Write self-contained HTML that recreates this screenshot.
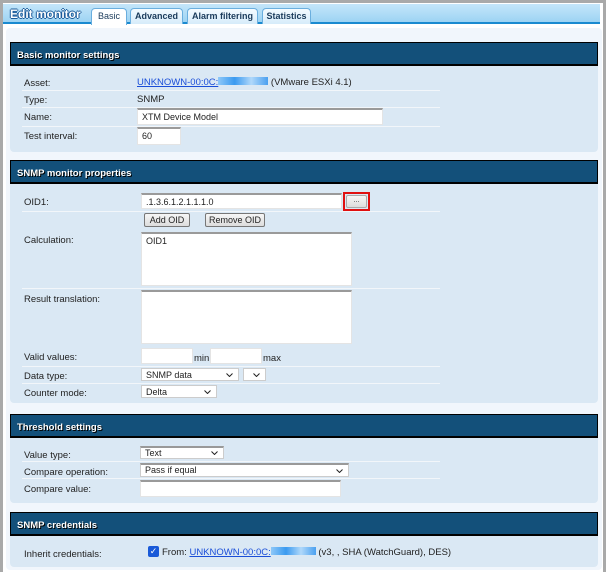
<!DOCTYPE html>
<html><head><style>
*{box-sizing:border-box;margin:0;padding:0}
body{width:606px;height:572px;background:#a9a9a9;font-family:"Liberation Sans",sans-serif;font-size:9.5px;color:#222;position:relative;overflow:hidden}
.page{position:absolute;left:3px;top:3px;width:600px;height:569px;background:#fff}
.bar{position:absolute;left:3px;top:4px;width:597px;height:20px;background:linear-gradient(#c4e6fa,#9dd3f3);border-bottom:2px solid #1a8ad0}
.title{position:absolute;left:10px;top:7px;font-size:12px;font-weight:bold;color:#fff;text-shadow:1px 0 #1a5a9a,-1px 0 #1a5a9a,0 1px #1a5a9a,0 -1px #1a5a9a}
.tab{position:absolute;top:8px;height:16px;background:linear-gradient(#f4fbff,#d6ecfa);border:1px solid #6aaede;border-bottom:none;border-radius:4px 4px 0 0;font-size:9px;font-weight:bold;color:#1a3a5a;text-align:center;line-height:15px}
.tab.on{background:#fff;height:17px;font-weight:normal}
.inner{position:absolute;left:6px;top:28px;width:596px;height:542px;background:#f1f6fc;border-radius:4px}
.sec{position:absolute;left:10px;width:588px;background:#dae8f4;border-radius:0 0 4px 4px}
.hd{position:absolute;left:0;top:0;width:100%;height:24px;background:#13507a;border:1px solid #000;border-bottom:2px solid #000;color:#fff;font-weight:bold;font-size:9.5px;padding:7px 6px;text-shadow:1px 1px #000}
.l{position:absolute;left:24px}
.v{position:absolute}
.sep{position:absolute;left:22px;width:418px;height:1px;background:#f2f6fa}
.in{position:absolute;background:#fff;border:1px solid #e4e4e4;border-top:2px solid #9a9a9a;font-size:9px;padding:2px 4px}
.sel{position:absolute;background:#fff;border:1px solid #ccc;font-size:9px;padding:0 4px;line-height:12px}
.sel svg{position:absolute;right:5px;top:4px}
.btn{position:absolute;background:linear-gradient(#f6f6f6,#ddd);border:1px solid #777;border-radius:2px;font-size:9px;text-align:center;line-height:13px}
a{color:#1a4ed8;text-decoration:underline}
.blur{display:inline-block;width:50px;height:8px;background:linear-gradient(90deg,#8ec8f8,#3a9af0,#b0d8fa,#4aa0f0)}
</style></head><body>
<div class="page"></div>
<div class="inner"></div>
<div class="bar"></div>
<div class="title">Edit monitor</div>
<div class="tab on" style="left:91px;width:36px">Basic</div>
<div class="tab" style="left:130px;width:53px">Advanced</div>
<div class="tab" style="left:187px;width:71px">Alarm filtering</div>
<div class="tab" style="left:262px;width:49px">Statistics</div>

<div class="sec" style="top:42px;height:110px"><div class="hd">Basic monitor settings</div></div>
<div class="l" style="top:78px">Asset:</div>
<div class="v" style="left:137px;top:77px"><a>UNKNOWN-00:0C:<span class="blur"></span></a> (VMware ESXi 4.1)</div>
<div class="sep" style="top:90px"></div>
<div class="l" style="top:95px">Type:</div><div class="v" style="left:137px;top:94px">SNMP</div>
<div class="sep" style="top:107px"></div>
<div class="l" style="top:112px">Name:</div>
<div class="in" style="left:137px;top:108px;width:246px;height:17px">XTM Device Model</div>
<div class="sep" style="top:126px"></div>
<div class="l" style="top:131px">Test interval:</div>
<div class="in" style="left:137px;top:127px;width:44px;height:18px">60</div>

<div class="sec" style="top:160px;height:243px"><div class="hd">SNMP monitor properties</div></div>
<div class="l" style="top:197px">OID1:</div>
<div class="in" style="left:141px;top:193px;width:201px;height:16px">.1.3.6.1.2.1.1.1.0</div>
<div style="position:absolute;left:343px;top:192px;width:27px;height:19px;border:2px solid #e01010"></div>
<div class="btn" style="left:346px;top:195px;width:21px;height:13px;border-color:#aaa;font-size:7px;line-height:9px">...</div>
<div class="sep" style="top:211px"></div>
<div class="btn" style="left:144px;top:213px;width:46px;height:14px">Add OID</div>
<div class="btn" style="left:205px;top:213px;width:60px;height:14px">Remove OID</div>
<div class="l" style="top:235px">Calculation:</div>
<div class="in" style="left:141px;top:232px;width:211px;height:54px">OID1</div>
<div class="sep" style="top:288px"></div>
<div class="l" style="top:294px">Result translation:</div>
<div class="in" style="left:141px;top:290px;width:211px;height:54px"></div>
<div class="l" style="top:352px">Valid values:</div>
<div class="in" style="left:141px;top:348px;width:52px;height:16px;border-top:1px solid #e4e4e4"></div>
<div class="v" style="left:194px;top:353px">min</div>
<div class="in" style="left:210px;top:348px;width:52px;height:16px;border-top:1px solid #e4e4e4"></div>
<div class="v" style="left:263px;top:353px">max</div>
<div class="sep" style="top:366px"></div>
<div class="l" style="top:371px">Data type:</div>
<div class="sel" style="left:141px;top:368px;width:98px;height:13px">SNMP data<svg width="7" height="4"><path d="M0.5 0.5L3.5 3.5L6.5 0.5" stroke="#222" fill="none"/></svg></div>
<div class="sel" style="left:243px;top:368px;width:23px;height:13px"><svg width="7" height="4"><path d="M0.5 0.5L3.5 3.5L6.5 0.5" stroke="#222" fill="none"/></svg></div>
<div class="sep" style="top:383px"></div>
<div class="l" style="top:388px">Counter mode:</div>
<div class="sel" style="left:141px;top:385px;width:76px;height:13px">Delta<svg width="7" height="4"><path d="M0.5 0.5L3.5 3.5L6.5 0.5" stroke="#222" fill="none"/></svg></div>

<div class="sec" style="top:414px;height:89px"><div class="hd">Threshold settings</div></div>
<div class="l" style="top:450px">Value type:</div>
<div class="sel" style="left:140px;top:446px;width:84px;height:13px;border-top:2px solid #999;line-height:10px">Text<svg width="7" height="4" style="top:3px"><path d="M0.5 0.5L3.5 3.5L6.5 0.5" stroke="#222" fill="none"/></svg></div>
<div class="sep" style="top:461px"></div>
<div class="l" style="top:467px">Compare operation:</div>
<div class="sel" style="left:140px;top:463px;width:209px;height:14px;border-top:2px solid #999;line-height:11px">Pass if equal<svg width="7" height="4" style="top:4px"><path d="M0.5 0.5L3.5 3.5L6.5 0.5" stroke="#222" fill="none"/></svg></div>
<div class="sep" style="top:478px"></div>
<div class="l" style="top:484px">Compare value:</div>
<div class="in" style="left:140px;top:480px;width:201px;height:17px"></div>

<div class="sec" style="top:512px;height:55px"><div class="hd">SNMP credentials</div></div>
<div class="l" style="top:549px">Inherit credentials:</div>
<div style="position:absolute;left:148px;top:546px;width:11px;height:11px;background:#1a5ad8;border-radius:2px;color:#fff;font-size:9px;line-height:11px;text-align:center">✓</div>
<div class="v" style="left:162px;top:547px">From: <a>UNKNOWN-00:0C:<span class="blur" style="width:45px"></span></a> (v3, , SHA (WatchGuard), DES)</div>
</body></html>
